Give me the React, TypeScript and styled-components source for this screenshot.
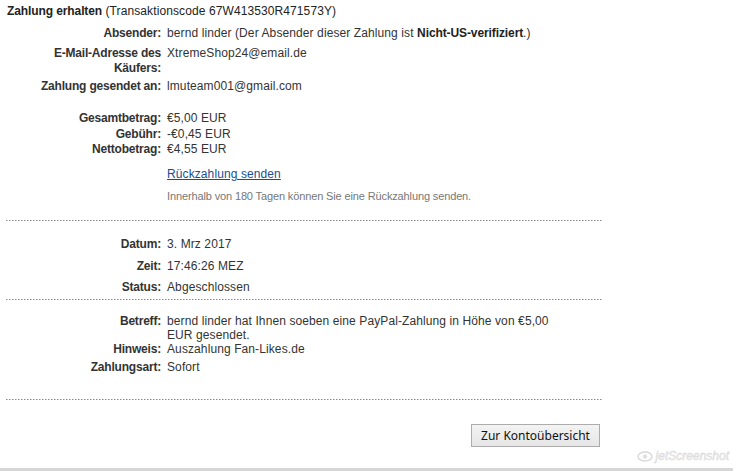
import React, { ReactElement } from 'react'
import styled, { createGlobalStyle } from 'styled-components'

const GlobalStyle = createGlobalStyle`
  html, body {
    margin: 0;
    padding: 0;
    background: #fff;
  }

  body {
    font-family: 'Liberation Sans', Arial, sans-serif;
    font-size: 12px;
    color: #333;
  }
`

const Page = styled.div`
  position: relative;
  min-height: 471px;
  display: flex;
  flex-direction: column;
  box-sizing: border-box;
  padding-top: 4px;
`

const Content = styled.div`
  width: 597px;
  padding-left: 6px;
`

const Title = styled.h1`
  margin: 0 0 0 1px;
  font-size: 12px;
  line-height: 15px;
  font-weight: normal;
  letter-spacing: 0.1px;
  color: #222;

  strong {
    font-weight: bold;
    letter-spacing: -0.1px;
  }
`

const Row = styled.div<{ $mt?: number; $lh?: number }>`
  display: grid;
  grid-template-columns: 155px 395px;
  column-gap: 6px;
  margin-top: ${(p) => p.$mt ?? 0}px;
  line-height: ${(p) => p.$lh ?? 15}px;
`

const Label = styled.div`
  text-align: right;
  font-weight: bold;
  letter-spacing: -0.2px;
  color: #333;
`

const Value = styled.div`
  color: #333;
  letter-spacing: 0.1px;

  strong {
    font-weight: bold;
    letter-spacing: -0.1px;
    color: #222;
  }
`

const RefundLink = styled.a`
  color: #1a4d8f;
  text-decoration: underline;
  cursor: pointer;
`

const Hint = styled.div`
  font-size: 11px;
  letter-spacing: -0.13px;
  color: #777;
`

const Divider = styled.div<{ $mt: number }>`
  margin-top: ${(p) => p.$mt}px;
  height: 1px;
  background-image: linear-gradient(
    to right,
    #8a8a8a 0,
    #8a8a8a 1px,
    #c4c4c4 1px,
    #c4c4c4 2px,
    transparent 2px
  );
  background-size: 3px 1px;
  background-repeat: repeat-x;
`

const Actions = styled.div`
  display: flex;
  justify-content: flex-end;
  margin-top: 24px;
  padding-right: 3px;
`

const Button = styled.button`
  height: 23px;
  width: 129px;
  padding: 0;
  font-family: 'Noto Sans', 'Open Sans', sans-serif;
  font-size: 12px;
  color: #111;
  background: linear-gradient(to bottom, #f3f3f3, #e6e6e6);
  border: 1px solid #acacac;
  border-radius: 0;
  cursor: pointer;
`

const BottomBar = styled.div`
  margin-top: auto;
  height: 3px;
  background: #d6d6d6;
`

const Watermark = styled.div`
  position: absolute;
  right: 4px;
  bottom: 8px;
  display: flex;
  align-items: center;
  gap: 3px;
  font-family: 'Liberation Sans', Arial, sans-serif;
  font-size: 12px;
  font-style: italic;
  color: #ececec;
  -webkit-text-stroke: 0.4px #d4d4d4;
`

export default function App(): ReactElement {
  return (
    <Page>
      <GlobalStyle />
      <Content>
        <Title>
          <strong>Zahlung erhalten</strong> (Transaktionscode 67W413530R471573Y)
        </Title>

        <Row $mt={7}>
          <Label>Absender:</Label>
          <Value>
            bernd linder (Der Absender dieser Zahlung ist{' '}
            <strong>Nicht-US-verifiziert</strong>.)
          </Value>
        </Row>
        <Row $mt={5}>
          <Label>E-Mail-Adresse des Käufers:</Label>
          <Value>XtremeShop24@email.de</Value>
        </Row>
        <Row $mt={3}>
          <Label>Zahlung gesendet an:</Label>
          <Value>lmuteam001@gmail.com</Value>
        </Row>

        <Row $mt={17}>
          <Label>Gesamtbetrag:</Label>
          <Value>€5,00 EUR</Value>
        </Row>
        <Row $mt={1}>
          <Label>Gebühr:</Label>
          <Value>-€0,45 EUR</Value>
        </Row>
        <Row>
          <Label>Nettobetrag:</Label>
          <Value>€4,55 EUR</Value>
        </Row>
        <Row $mt={10}>
          <Label />
          <Value>
            <RefundLink>Rückzahlung senden</RefundLink>
          </Value>
        </Row>
        <Row $mt={7}>
          <Label />
          <Hint>Innerhalb von 180 Tagen können Sie eine Rückzahlung senden.</Hint>
        </Row>

        <Divider $mt={16} />

        <Row $mt={16}>
          <Label>Datum:</Label>
          <Value>3. Mrz 2017</Value>
        </Row>
        <Row $mt={7}>
          <Label>Zeit:</Label>
          <Value>17:46:26 MEZ</Value>
        </Row>
        <Row $mt={6}>
          <Label>Status:</Label>
          <Value>Abgeschlossen</Value>
        </Row>

        <Divider $mt={4} />

        <Row $mt={14} $lh={14}>
          <Label>Betreff:</Label>
          <Value>
            bernd linder hat Ihnen soeben eine PayPal-Zahlung in Höhe von €5,00 EUR
            gesendet.
          </Value>
        </Row>
        <Row>
          <Label>Hinweis:</Label>
          <Value>Auszahlung Fan-Likes.de</Value>
        </Row>
        <Row $mt={3}>
          <Label>Zahlungsart:</Label>
          <Value>Sofort</Value>
        </Row>

        <Divider $mt={24} />

        <Actions>
          <Button type="button">Zur Kontoübersicht</Button>
        </Actions>
      </Content>

      <Watermark>
        <svg width="16" height="11" viewBox="0 0 16 11">
          <ellipse cx="8" cy="5.5" rx="7" ry="4.5" fill="none" stroke="#d8d8d8" strokeWidth="1.4" />
          <circle cx="8" cy="5.5" r="2.2" fill="#e0e0e0" />
        </svg>
        jetScreenshot
      </Watermark>
      <BottomBar />
    </Page>
  )
}
